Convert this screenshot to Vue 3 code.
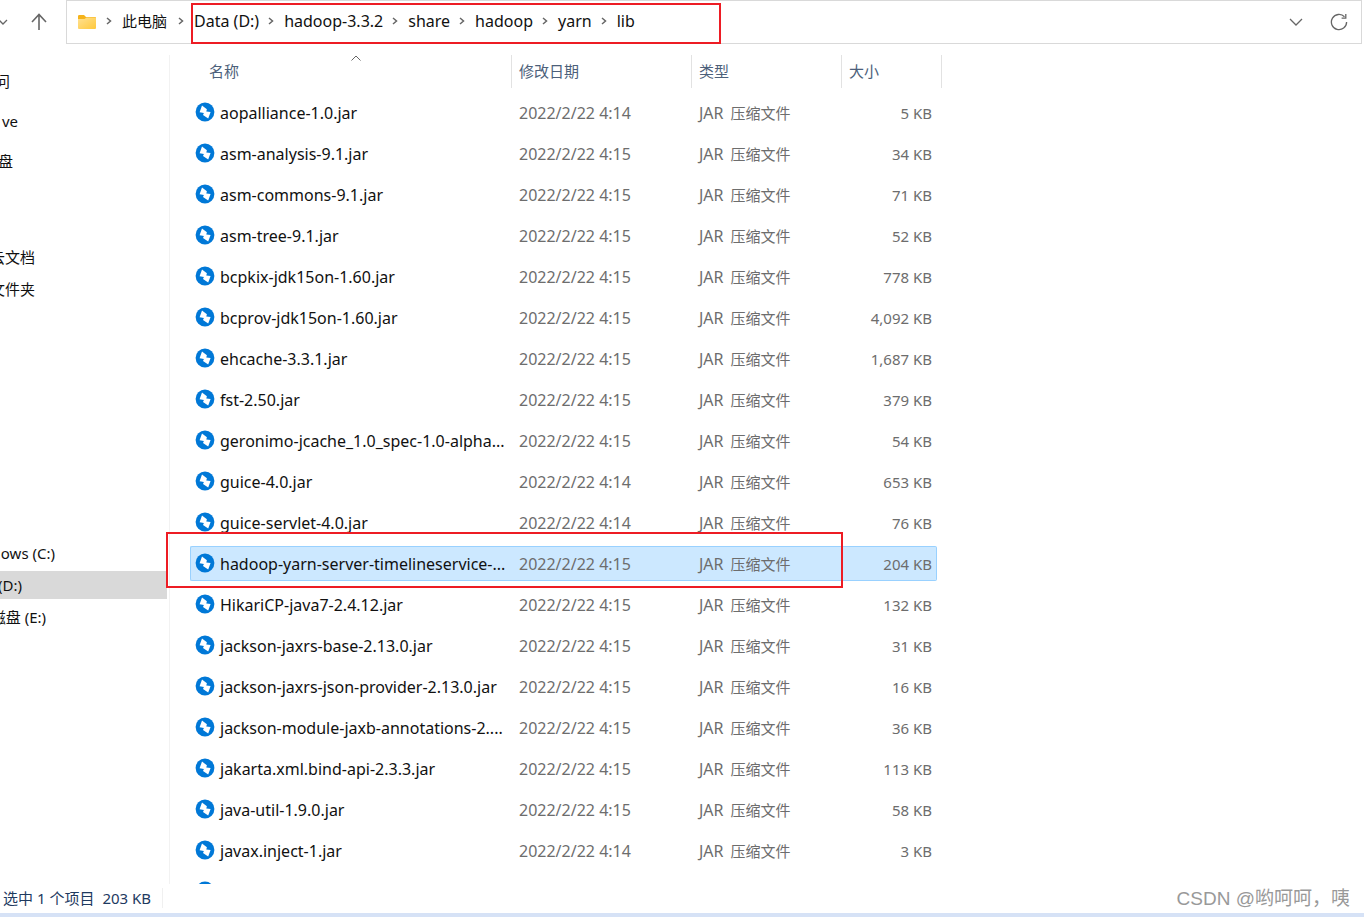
<script setup>
const crumbs = ['此电脑', 'Data (D:)', 'hadoop-3.3.2', 'share', 'hadoop', 'yarn', 'lib']

// `end` is where each label stops; the tree is scrolled past its left edge
const places = [
  { name: 'quick', items: [{ text: '问', end: 10 }, { text: 've', end: 18 }, { text: '盘', end: 13 }] },
  { name: 'folders', items: [{ text: '云文档', end: 35 }, { text: '文件夹', end: 35 }] },
  {
    name: 'drives',
    items: [
      { text: 'ows (C:)', end: 55 },
      { text: '(D:)', end: 22, active: true },
      { text: '磁盘 (E:)', end: 46 }
    ]
  }
]

const files = [
  ['aopalliance-1.0.jar', '4:14', '5'],
  ['asm-analysis-9.1.jar', '4:15', '34'],
  ['asm-commons-9.1.jar', '4:15', '71'],
  ['asm-tree-9.1.jar', '4:15', '52'],
  ['bcpkix-jdk15on-1.60.jar', '4:15', '778'],
  ['bcprov-jdk15on-1.60.jar', '4:15', '4,092'],
  ['ehcache-3.3.1.jar', '4:15', '1,687'],
  ['fst-2.50.jar', '4:15', '379'],
  ['geronimo-jcache_1.0_spec-1.0-alpha...', '4:15', '54'],
  ['guice-4.0.jar', '4:14', '653'],
  ['guice-servlet-4.0.jar', '4:14', '76'],
  ['hadoop-yarn-server-timelineservice-...', '4:15', '204'],
  ['HikariCP-java7-2.4.12.jar', '4:15', '132'],
  ['jackson-jaxrs-base-2.13.0.jar', '4:15', '31'],
  ['jackson-jaxrs-json-provider-2.13.0.jar', '4:15', '16'],
  ['jackson-module-jaxb-annotations-2....', '4:15', '36'],
  ['jakarta.xml.bind-api-2.3.3.jar', '4:15', '113'],
  ['java-util-1.9.0.jar', '4:15', '58'],
  ['javax.inject-1.jar', '4:14', '3'],
  ['', '', '']
]
const selected = 11
</script>

<template>
  <div class="explorer">
    <header class="toolbar">
      <button class="icon-btn recent" aria-label="Recent">
        <svg width="10" height="8" viewBox="0 0 10 8"><path d="M1 2l4 4 4-4" /></svg>
      </button>
      <button class="icon-btn up" aria-label="Up">
        <svg width="18" height="18" viewBox="0 0 18 18"><path d="M9 17V2M2 9l7-7.5L16 9" /></svg>
      </button>
      <nav class="address">
        <svg class="folder" width="20" height="16" viewBox="0 0 20 16">
          <defs>
            <linearGradient id="folder-face" x1="0" y1="0" x2="1" y2="1">
              <stop offset="0" stop-color="#ffe193" />
              <stop offset="1" stop-color="#ffc93c" />
            </linearGradient>
          </defs>
          <path d="M1 2.2Q1 1 2.2 1H7l2 2h9q1 0 1 1v4H1z" fill="#f5b31b" />
          <path d="M1 5h6.5l2-1.5H18q1 0 1 1V14q0 1-1 1H2q-1 0-1-1z" fill="url(#folder-face)" />
        </svg>
        <ol class="crumbs">
          <li v-for="c in crumbs" :key="c">
            <svg class="sep" width="6" height="8" viewBox="0 0 6 8"><path d="M1 1l3.5 3L1 7" /></svg>
            <button>{{ c }}</button>
          </li>
        </ol>
        <button class="icon-btn" aria-label="History">
          <svg width="14" height="10" viewBox="0 0 14 10"><path d="M1 2l6 6 6-6" /></svg>
        </button>
        <button class="icon-btn refresh" aria-label="Refresh">
          <svg width="18" height="18" viewBox="0 0 18 18">
            <path d="M16.6 9A7.6 7.6 0 1 1 14.5 3.8M15.8 1v4.2H11.6" />
          </svg>
        </button>
      </nav>
      <div class="mark mark-path"></div>
    </header>

    <div class="body">
      <aside class="sidebar">
        <ul v-for="g in places" :key="g.name" :class="g.name">
          <li v-for="p in g.items" :key="p.text" :class="{ active: p.active }">
            <span :style="{ width: p.end + 'px' }">{{ p.text }}</span>
          </li>
        </ul>
      </aside>

      <main class="list">
        <table>
          <thead>
            <tr>
              <th class="c-name">
                <button>名称</button>
                <svg class="sort" width="10" height="6" viewBox="0 0 10 6"><path d="M.5 5.5l4.5-4.5 4.5 4.5" /></svg>
              </th>
              <th class="c-date"><button>修改日期</button></th>
              <th class="c-type"><button>类型</button></th>
              <th class="c-size"><button>大小</button></th>
            </tr>
          </thead>
          <tbody>
            <tr v-for="(f, i) in files" :key="i" :class="{ selected: i === selected }">
              <td>
                <div class="cell name">
                  <svg width="20" height="20" viewBox="0 0 20 20">
                    <circle cx="10" cy="10" r="9.4" fill="#0078d7" />
                    <path d="M7 3.6L11.9 7.2 11.3 9.5 15.6 9.9 13.2 16.6 8 13 8.9 10.9 4.6 10.3z" fill="#fff" />
                  </svg>
                  <span>{{ f[0] }}</span>
                </div>
              </td>
              <td><div class="cell date"><template v-if="f[1]">2022/2/22 {{ f[1] }}</template></div></td>
              <td><div class="cell type"><template v-if="f[1]"><span class="ext">JAR</span>压缩文件</template></div></td>
              <td><div class="cell size"><template v-if="f[2]">{{ f[2] }} KB</template></div></td>
            </tr>
          </tbody>
        </table>
      </main>
      <div class="mark mark-row"></div>
    </div>

    <footer class="status">
      <span>选中 1 个项目</span>
      <span class="total">203 KB</span>
    </footer>
    <div class="desktop-edge"></div>
    <div class="watermark">CSDN @哟呵呵，咦</div>
  </div>
</template>

<style>
body {
  margin: 0;
  background: #fff;
}
</style>

<style scoped>
.explorer {
  position: relative;
  display: flex;
  flex-direction: column;
  height: 100vh;
  overflow: hidden;
  font-family: "Noto Sans", "Noto Sans CJK SC", sans-serif;
  font-size: 15px;
  line-height: 20px;
  color: #111;
}
button {
  border: 0;
  padding: 0;
  background: none;
  font: inherit;
  color: inherit;
}
ul, ol {
  list-style: none;
  margin: 0;
  padding: 0;
}
svg {
  display: block;
  flex: none;
}
.icon-btn path, .sep path, .sort path {
  fill: none;
  stroke: #666;
  stroke-width: 1.3;
}
.toolbar {
  position: relative;
  display: flex;
  align-items: center;
  height: 44px;
  flex: none;
}
.recent {
  width: 8px;
  display: flex;
  justify-content: flex-end;
}
.up {
  margin-left: 22px;
}
.up path {
  stroke-width: 1.6;
}
.address {
  flex: 1;
  box-sizing: border-box;
  height: 44px;
  margin: 0 2px 0 18px;
  padding: 0 13px 0 10px;
  display: flex;
  align-items: center;
  border: 1px solid #d9d9d9;
}
.crumbs {
  flex: 1;
  display: flex;
  padding-bottom: 2px;
  font-size: 16px;
}
.crumbs li {
  display: flex;
  align-items: center;
}
.crumbs li:first-child {
  margin-right: 2px;
  font-size: 15px;
}
.sep {
  margin: 0 10px 0 9px;
}
.sep path {
  stroke-width: 1.5;
}
.refresh {
  margin-left: 27px;
}
.body {
  position: relative;
  flex: 1;
  min-height: 0;
  display: flex;
}
.sidebar {
  box-sizing: border-box;
  width: 167px;
  flex: none;
  padding-top: 23px;
  overflow: hidden;
}
.sidebar ul {
  display: flex;
  flex-direction: column;
  gap: 4px;
}
.sidebar .quick {
  gap: 12px;
}
.sidebar .folders {
  margin-top: 68px;
}
.sidebar .drives {
  margin-top: 236px;
}
.sidebar li {
  height: 28px;
  display: flex;
  align-items: center;
}
.sidebar li span {
  display: flex;
  justify-content: flex-end;
  white-space: nowrap;
}
.sidebar .active {
  background: #d9d9d9;
}
.list {
  flex: 1;
  margin: 11px 0 0 2px;
  padding-left: 20px;
  border-left: 1px solid #f2f2f2;
  overflow: hidden;
}
table {
  width: 752px;
  table-layout: fixed;
  border-collapse: separate;
  border-spacing: 0;
}
th {
  position: relative;
  box-sizing: border-box;
  height: 33px;
  padding: 0 0 2px 7px;
  border-right: 1px solid #e2e2e2;
  text-align: left;
  font-weight: 400;
  color: #4c607a;
}
.c-name {
  width: 322px;
  padding-left: 19px;
}
.c-date {
  width: 180px;
}
.c-type {
  width: 150px;
}
.c-size {
  width: 100px;
}
.sort {
  position: absolute;
  top: 0;
  left: 161px;
}
.sort path {
  stroke-width: 1;
}
tbody::before {
  content: "";
  display: block;
  height: 4px;
}
td {
  height: 35px;
  padding: 3px 0;
}
.cell {
  box-sizing: border-box;
  height: 35px;
  display: flex;
  align-items: center;
  padding-left: 7px;
  border: solid transparent;
  border-width: 1px 0;
  color: #6d6d6d;
  white-space: nowrap;
}
.cell.name {
  padding-left: 4px;
  border-left-width: 1px;
  gap: 5px;
  font-size: 16px;
  color: #111;
}
.cell.name svg {
  margin-bottom: 2px;
}
.cell.date, .ext {
  font-size: 16px;
}
.ext {
  margin-right: 7px;
}
.cell.size {
  margin-right: 5px;
  padding: 0 4px 0 0;
  border-right-width: 1px;
  justify-content: flex-end;
}
.selected .cell {
  background: #cce8ff;
  border-color: #99d1ff;
}
.selected .name {
  border-radius: 2px 0 0 2px;
}
.selected .size {
  border-radius: 0 2px 2px 0;
}
.mark {
  position: absolute;
  box-sizing: border-box;
  border: 2px solid #ed1c24;
  pointer-events: none;
}
.mark-path {
  top: 3px;
  left: 191px;
  width: 530px;
  height: 41px;
}
.mark-row {
  top: 488px;
  left: 166px;
  width: 677px;
  height: 56px;
}
.status {
  box-sizing: border-box;
  flex: none;
  height: 29px;
  display: flex;
  align-items: center;
  align-self: flex-start;
  padding: 0 0 2px 3px;
  gap: 8px;
  color: #1e3a5f;
}
.total {
  padding-right: 11px;
  border-right: 1px solid #f0f0f0;
}
.desktop-edge {
  flex: none;
  height: 4px;
  background: #d6e2f6;
}
.watermark {
  position: absolute;
  right: 14px;
  bottom: 5px;
  font-family: "Liberation Sans", "Noto Sans CJK SC", sans-serif;
  font-size: 19px;
  line-height: 26px;
  color: #999;
  text-shadow: 1px 1px 0 #fff;
}
</style>
